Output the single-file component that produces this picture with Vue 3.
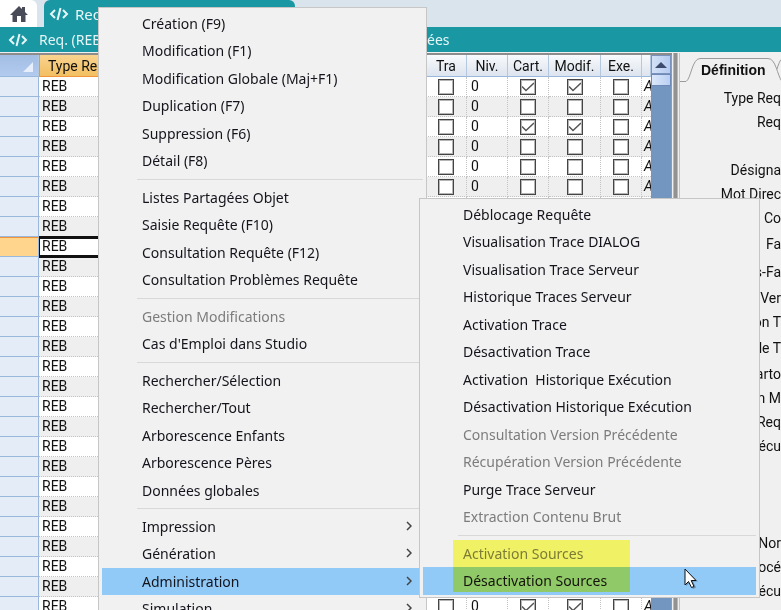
<template>
  <div class="app">
    <nav class="tabs">
      <a class="tab home" href="#" aria-label="Accueil">
        <svg width="18" height="16" viewBox="0 0 18 16">
          <path d="M9 0 L12 3 V1 H15 V6 L18 9 H15.500 V16 H11 V10 H7 V16 H2.500 V9 H0 Z" fill="#4a4b59" />
        </svg>
      </a>
      <a class="tab active" href="#">
        <svg class="code" width="20" height="14" viewBox="0 0 20 14">
          <path d="M6 3 L2 7 L6 11 M14 3 L18 7 L14 11 M11.500 1 L8.500 13" />
        </svg>
        Req. (REB)
      </a>
    </nav>

    <header class="title">
      <svg class="code" width="20" height="14" viewBox="0 0 20 14">
        <path d="M6 3 L2 7 L6 11 M14 3 L18 7 L14 11 M11.500 1 L8.500 13" />
      </svg>
      <span class="name">Req. (REB)</span>
      <span class="suffix">ées</span>
    </header>

    <main class="body">
      <div class="grid">
        <table>
          <colgroup>
            <col class="c-head" />
            <col class="c-type" />
            <col />
            <col class="c-mid" />
            <col class="c-mid" />
            <col class="c-mid" />
            <col class="c-wide" />
            <col class="c-mid" />
            <col class="c-last" />
          </colgroup>
          <thead>
            <tr>
              <th class="corner"></th>
              <th class="sorted">Type Req</th>
              <th></th>
              <th>Tra</th>
              <th>Niv.</th>
              <th>Cart.</th>
              <th>Modif.</th>
              <th>Exe.</th>
              <th></th>
            </tr>
          </thead>
          <tbody>
            <tr v-for="n in 27" :key="n" :class="{ current: n === 9 }">
              <th></th>
              <td class="type">REB</td>
              <td></td>
              <td><input type="checkbox" aria-label="Tra" /></td>
              <td class="niv">0</td>
              <td><input type="checkbox" aria-label="Cart." :checked="checkedRows.includes(n)" /></td>
              <td><input type="checkbox" aria-label="Modif." :checked="checkedRows.includes(n)" /></td>
              <td><input type="checkbox" aria-label="Exe." /></td>
              <td class="last">A</td>
            </tr>
          </tbody>
        </table>
        <div class="scroll">
          <button class="up" aria-label="Défiler vers le haut">
            <svg width="12" height="6" viewBox="0 0 12 6"><path d="M6 0 L12 6 H0 Z" fill="#3c4a6e" /></svg>
          </button>
          <div class="thumb"></div>
        </div>
      </div>
      <div class="splitter"></div>
      <aside class="panel">
        <button class="panel-tab">
          <svg width="102" height="25" viewBox="0 0 102 25">
            <path d="M0 24.500 H6 C11 22 12 1.500 20 1.500 H88 C96 1.500 97 18 102 24.500 M97 12 C99 6 100 3 102 2" fill="none" stroke="#9a9a9a" />
          </svg>
          <span>Définition</span>
        </button>
        <div class="fields">
          <div v-for="(group, i) in fields" :key="i" class="group" :class="group.gap">
            <div v-for="(label, j) in group.labels" :key="j" class="field">{{ label }}</div>
          </div>
        </div>
      </aside>
    </main>

    <div class="menu main-menu">
      <ul v-for="(group, i) in menu" :key="i">
        <li v-for="item in group" :key="item.text">
          <button :disabled="item.off" :class="{ hover: item.hover }">
            <span>{{ item.text }}</span>
            <svg v-if="item.sub" width="6" height="10" viewBox="0 0 6 10">
              <path d="M1 1 L5 5 L1 9" fill="none" stroke="#444" stroke-width="1.500" />
            </svg>
          </button>
        </li>
      </ul>
    </div>

    <div class="menu sub-menu">
      <ul v-for="(group, i) in subMenu" :key="i">
        <li v-for="item in group" :key="item.text">
          <button :disabled="item.off" :class="{ hover: item.hover }">
            <span>{{ item.text }}</span>
          </button>
        </li>
      </ul>
      <div class="marker"></div>
      <svg class="pointer" width="16" height="22" viewBox="0 0 16 22">
        <path d="M2 2 V18 L6 14.500 L9 21 L12 19.500 L9 13.500 H14 Z" fill="#000" opacity="0.3" />
        <path d="M1 1 V17 L4.500 13.500 L7.500 19.500 L10 18.500 L7.200 12.500 H12 Z" fill="#fff" stroke="#111" />
      </svg>
    </div>
  </div>
</template>

<script setup>
const checkedRows = [1, 3, 27]

const fields = [
  { labels: ['Type Req', 'Req'] },
  { gap: 'line', labels: ['Désigna', 'Mot Direc', 'n Co'] },
  { gap: 'small', labels: ['Fa'] },
  { gap: 'medium', labels: ['Sous-Fa'] },
  { gap: 'small', labels: ['Ver', 'on T'] },
  { gap: 'small', labels: ['de T'] },
  { gap: 'small', labels: ['Carto', 'on M', 'Req', 'Exécu'] },
  { gap: 'large', labels: ['Nor', 'Procé', 'Exécu'] }
]

const menu = [
  [
    { text: 'Création (F9)' },
    { text: 'Modification (F1)' },
    { text: 'Modification Globale (Maj+F1)' },
    { text: 'Duplication (F7)' },
    { text: 'Suppression (F6)' },
    { text: 'Détail (F8)' }
  ],
  [
    { text: 'Listes Partagées Objet' },
    { text: 'Saisie Requête (F10)' },
    { text: 'Consultation Requête (F12)' },
    { text: 'Consultation Problèmes Requête' }
  ],
  [
    { text: 'Gestion Modifications', off: true },
    { text: "Cas d'Emploi dans Studio" }
  ],
  [
    { text: 'Rechercher/Sélection' },
    { text: 'Rechercher/Tout' },
    { text: 'Arborescence Enfants' },
    { text: 'Arborescence Pères' },
    { text: 'Données globales' }
  ],
  [
    { text: 'Impression', sub: true },
    { text: 'Génération', sub: true },
    { text: 'Administration', sub: true, hover: true },
    { text: 'Simulation', sub: true }
  ]
]

const subMenu = [
  [
    { text: 'Déblocage Requête' },
    { text: 'Visualisation Trace DIALOG' },
    { text: 'Visualisation Trace Serveur' },
    { text: 'Historique Traces Serveur' },
    { text: 'Activation Trace' },
    { text: 'Désactivation Trace' },
    { text: 'Activation  Historique Exécution' },
    { text: 'Désactivation Historique Exécution' },
    { text: 'Consultation Version Précédente', off: true },
    { text: 'Récupération Version Précédente', off: true },
    { text: 'Purge Trace Serveur' },
    { text: 'Extraction Contenu Brut', off: true }
  ],
  [
    { text: 'Activation Sources', off: true },
    { text: 'Désactivation Sources', hover: true }
  ]
]
</script>

<style>
body {
  margin: 0;
  overflow: hidden;
}
</style>

<style scoped>
* {
  box-sizing: border-box;
}
.app {
  position: relative;
  display: flex;
  flex-direction: column;
  height: 100vh;
  overflow: hidden;
  background: #f0f0f0;
  color: #111;
  font-family: Roboto, 'Liberation Sans', sans-serif;
  font-size: 14px;
}
button {
  margin: 0;
  padding: 0;
  border: 0;
  background: none;
  color: inherit;
  font: inherit;
}
.tabs {
  display: flex;
  flex: none;
  gap: 7px;
  height: 27px;
  background: #d9e4ec;
}
.tab {
  display: flex;
  align-items: center;
  text-decoration: none;
}
.home {
  justify-content: center;
  width: 37px;
  border-radius: 0 6px 0 0;
  background: #fff;
}
.active {
  gap: 6px;
  width: 251px;
  padding-left: 5px;
  border-radius: 6px 6px 0 0;
  background: #1997a3;
  color: #e6f6f7;
  font-family: 'Noto Sans', sans-serif;
  font-size: 15px;
}
.code {
  flex: none;
  fill: none;
  stroke: #e6f6f7;
  stroke-width: 2;
}
.title {
  display: flex;
  flex: none;
  align-items: center;
  height: 25px;
  padding-left: 8px;
  background: #1997a3;
  color: #e6f6f7;
  font-family: 'Noto Sans', sans-serif;
}
.name {
  width: 387px;
  padding-left: 11px;
}
.suffix {
  padding-left: 12px;
}
.body {
  display: flex;
  flex: 1;
  min-height: 0;
  padding-top: 1px;
}
.grid {
  display: flex;
  flex: 1;
  min-width: 0;
  overflow: hidden;
  border-top: 2px solid #8c8c8c;
}
table {
  flex: 1;
  width: 0;
  height: 0;
  table-layout: fixed;
  border-collapse: separate;
  border-spacing: 0;
}
.c-head {
  width: 39px;
}
.c-type {
  width: 75px;
}
.c-mid {
  width: 41px;
}
.c-wide {
  width: 52px;
}
.c-last {
  width: 9px;
}
thead th {
  height: 22px;
  padding: 0;
  overflow: hidden;
  border-right: 1px solid #b3c7df;
  border-bottom: 1px solid #9ab8dc;
  background: linear-gradient(#f8fafc, #dde4ee);
  font-weight: 400;
  white-space: nowrap;
}
thead .corner {
  position: relative;
  background: linear-gradient(#a3bee4, #b2caee);
}
.corner::after {
  content: '';
  position: absolute;
  right: 5px;
  bottom: 4px;
  border: 5px solid transparent;
  border-right-color: #e6effb;
  border-bottom-color: #e6effb;
}
thead .sorted {
  padding-left: 8px;
  border-color: #f0953c;
  border-left: 1px solid #f0953c;
  background: linear-gradient(#f9d38f, #f2bf62);
  text-align: left;
}
tbody th {
  height: 20px;
  padding: 0;
  border-right: 1px solid #9ab8dc;
  border-bottom: 1px solid #9ab8dc;
  background: #e4ecf7;
}
td {
  height: 20px;
  padding: 0;
  overflow: hidden;
  border-right: 1px dotted #c4c4c4;
  border-bottom: 1px dotted #c4c4c4;
  background: #fff;
  line-height: 19px;
  text-align: center;
}
tr:nth-child(even) td {
  background: #efefef;
}
td.type {
  padding-left: 3px;
  text-align: left;
}
td.niv {
  padding-left: 4px;
  text-align: left;
}
td.last {
  padding-left: 2px;
  border-right: 0;
  font-style: italic;
  text-align: left;
}
.current th {
  border-top: 1px solid #f0953c;
  background: #ffd48c;
}
.current td.type {
  position: relative;
  box-shadow: inset 1px 2px #111, inset 0 -1px #111, 0 -1px #111, 0 1px #111;
  border-bottom: 1px solid #111;
}
input {
  display: block;
  width: 16px;
  height: 16px;
  margin: 1px auto;
  border: 1px solid #444;
  background: #fff;
  box-shadow: inset 0 0 0 1px #b5b5b5;
  appearance: none;
}
input:checked {
  background: #fff url("data:image/svg+xml,%3Csvg xmlns='http://www.w3.org/2000/svg' viewBox='0 0 14 14'%3E%3Cpath d='M1 6.500 L5 10.500 L13 3' fill='none' stroke='%23555' stroke-width='1.500'/%3E%3C/svg%3E");
}
.scroll {
  display: flex;
  flex: none;
  flex-direction: column;
  width: 21px;
  border-right: 1px solid #8c9cb4;
  background: #7396c0;
}
.up {
  height: 19px;
  border: 1px solid #7a93bd;
  background: linear-gradient(90deg, #d3e1f7, #b5cbef);
  line-height: 0;
}
.thumb {
  height: 12px;
  border: 1px solid #6d89b8;
  background: linear-gradient(90deg, #dce8fa, #b9cff2);
}
.splitter {
  flex: none;
  width: 5px;
  margin: 0 1px;
  border: solid #b8b8b8;
  border-width: 0 1px;
  background: #929292;
}
.panel {
  flex: none;
  width: 102px;
  overflow: hidden;
  border-left: 1px solid #c4c4c4;
}
.panel-tab {
  position: relative;
  display: block;
  width: 100%;
  height: 33px;
  padding-left: 21px;
  font-family: 'Liberation Sans', sans-serif;
  font-weight: 700;
  text-align: left;
}
.panel-tab svg {
  position: absolute;
  top: 4px;
  left: 0;
}
.group {
  text-align: right;
}
.small {
  padding-top: 2px;
}
.medium {
  padding-top: 4px;
}
.line {
  padding-top: 24px;
}
.large {
  padding-top: 73px;
}
.field {
  height: 24px;
  line-height: 24px;
  white-space: nowrap;
}
.menu {
  position: absolute;
  padding: 2px 3px;
  border: 1px solid #c6c6c6;
  background: #f1f1f1;
  color: #14141c;
  font-family: 'Noto Sans', sans-serif;
}
.main-menu {
  top: 7px;
  left: 98px;
  width: 329px;
}
.sub-menu {
  top: 198px;
  left: 419px;
  width: 341px;
}
.menu ul {
  margin: 0;
  padding: 0;
  list-style: none;
}
.menu ul + ul::before {
  content: '';
  display: block;
  height: 1px;
  margin: 4px 0 4px 35px;
  background: #d8d8d8;
}
.menu button {
  display: flex;
  align-items: center;
  justify-content: space-between;
  width: 100%;
  height: 27px;
  padding: 0 11px 1px 40px;
  white-space: pre;
}
.menu li:nth-child(even) button {
  height: 28px;
  padding-bottom: 2px;
}
.menu button.hover {
  background: #91c9f7;
}
.menu button:disabled {
  color: #7c7c7c;
}
.marker {
  position: absolute;
  right: 129px;
  bottom: 5px;
  left: 33px;
  height: 52px;
  background: #feff6a;
  mix-blend-mode: multiply;
}
.pointer {
  position: absolute;
  right: 59px;
  bottom: 7px;
}
</style>
